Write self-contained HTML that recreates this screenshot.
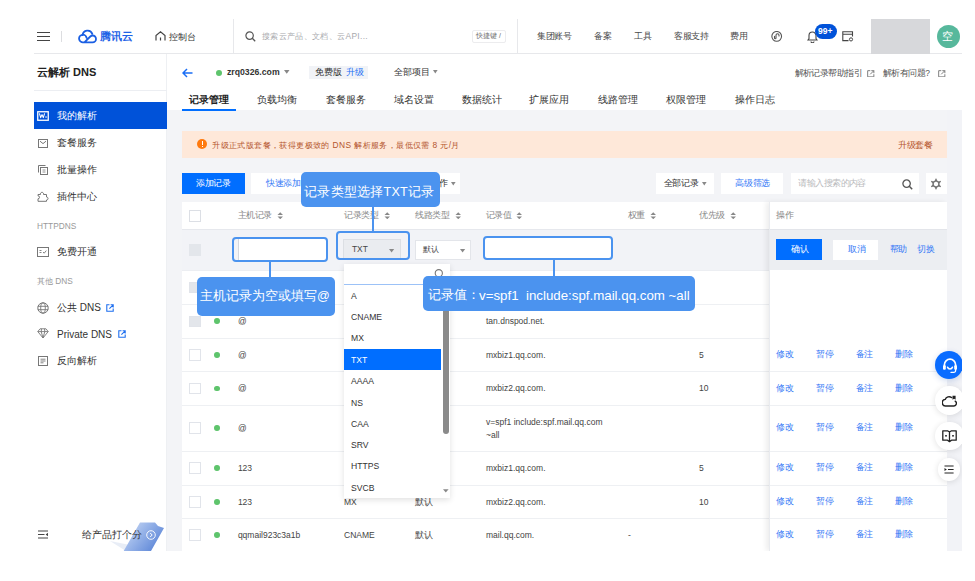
<!DOCTYPE html>
<html><head><meta charset="utf-8">
<style>
*{margin:0;padding:0;box-sizing:border-box}
html,body{width:975px;height:581px;overflow:hidden;background:#fff;font-family:"Liberation Sans",sans-serif;color:#333}
.a{position:absolute}
.t{position:absolute;white-space:nowrap;line-height:1}
#frame{position:absolute;left:34px;top:19px;width:928px;height:532px;overflow:hidden;background:#fff}
</style></head><body>
<div id="frame">
  <!-- top nav (frame coords: subtract 34,19) -->
  <div class="a" style="left:0;top:0;width:928px;height:35px;border-bottom:1px solid #e7e8eb;background:#fff"></div>

  <!-- NAV CONTENT -->
  <div class="a" style="left:3px;top:13px;width:13px;height:1.4px;background:#444"></div>
  <div class="a" style="left:3px;top:17px;width:13px;height:1.4px;background:#444"></div>
  <div class="a" style="left:3px;top:21px;width:13px;height:1.4px;background:#444"></div>
  <div class="a" style="left:27px;top:12px;width:1px;height:11px;background:#dcdde0"></div>
  <svg class="a" style="left:44px;top:10px" width="20" height="16" viewBox="0 0 20 16"><g fill="none" stroke="#1a5fe3" stroke-width="1.8" stroke-linecap="round" stroke-linejoin="round"><path d="M4.6 6.2 A5 5 0 0 1 14.3 4.9"/><path d="M8.6 8.8 A3.8 3.8 0 1 0 5.4 13.3 H14.6 A3.4 3.4 0 0 0 14.6 6.5 C13.6 6.5 13 6.9 12.3 7.5 L6.4 13.3"/></g></svg>
  <div class="t" style="left:66.00px;top:12px;font-size:10.8px;font-weight:bold;color:#1f63e6;width:33.00px;text-align:justify;text-align-last:justify">腾讯云</div>
  <svg class="a" style="left:121px;top:12px" width="11" height="10" viewBox="0 0 11 10"><path d="M1 9.5 V4.5 L5.5 0.8 L10 4.5 V9.5 M5.5 9.5 V6.5" fill="none" stroke="#444" stroke-width="1.2"/></svg>
  <div class="t" style="left:135.00px;top:13.5px;font-size:8.5px;color:#333;width:27.00px;text-align:justify;text-align-last:justify">控制台</div>
  <div class="a" style="left:199.4px;top:0;width:1px;height:35px;background:#e7e8eb"></div>
  <div class="a" style="left:483px;top:0;width:1px;height:35px;background:#e7e8eb"></div>
  <svg class="a" style="left:211px;top:12px" width="11" height="11" viewBox="0 0 11 11"><circle cx="4.6" cy="4.6" r="3.7" fill="none" stroke="#555" stroke-width="1.2"/><path d="M7.3 7.3 L10.2 10.2" stroke="#555" stroke-width="1.3"/></svg>
  <div class="t" style="left:228.00px;top:13px;font-size:8.4px;letter-spacing:0.35px;color:#a8a9ad;width:83.50px;text-align:justify;text-align-last:justify">搜索云产品、文档、云</div>
  <div class="t" style="left:311.48px;top:13px;font-size:8.4px;letter-spacing:0.35px;color:#a8a9ad">API...</div>
  <div class="a" style="left:438px;top:11px;width:34px;height:13px;border:1px solid #ececee;border-radius:2px"></div>
  <div class="t" style="left:442.00px;top:14px;font-size:6.8px;color:#666;width:21.00px;text-align:justify;text-align-last:justify">快捷键</div>
  <div class="t" style="left:464.88px;top:14px;font-size:6.8px;color:#666">/</div>
  <div class="t" style="left:503.00px;top:13px;font-size:8.5px;letter-spacing:-0.3px;color:#4a4a4a;width:34.81px;text-align:justify;text-align-last:justify">集团账号</div>
  <div class="t" style="left:560.00px;top:13px;font-size:8.5px;letter-spacing:-0.3px;color:#4a4a4a;width:17.41px;text-align:justify;text-align-last:justify">备案</div>
  <div class="t" style="left:600.00px;top:13px;font-size:8.5px;letter-spacing:-0.3px;color:#4a4a4a;width:17.41px;text-align:justify;text-align-last:justify">工具</div>
  <div class="t" style="left:640.00px;top:13px;font-size:8.5px;letter-spacing:-0.3px;color:#4a4a4a;width:34.81px;text-align:justify;text-align-last:justify">客服支持</div>
  <div class="t" style="left:696.00px;top:13px;font-size:8.5px;letter-spacing:-0.3px;color:#4a4a4a;width:17.41px;text-align:justify;text-align-last:justify">费用</div>
  <svg class="a" style="left:737px;top:12px" width="12" height="12" viewBox="0 0 12 12"><circle cx="5.7" cy="5.35" r="4.85" fill="none" stroke="#555" stroke-width="1.1"/><path d="M3.5 5.4 V7 A0.75 0.75 0 0 0 5 7 V4.2 A1.5 1.5 0 0 1 8 4.2 V5" fill="none" stroke="#555" stroke-width="1.1" stroke-linecap="round"/></svg>
  <svg class="a" style="left:773px;top:11px" width="11" height="13" viewBox="0 0 11 13"><path d="M1 10 H10 L9 8.6 V5.5 A3.5 3.5 0 0 0 2 5.5 V8.6 Z M4 11.5 A1.5 1.2 0 0 0 7 11.5" fill="none" stroke="#444" stroke-width="1.1"/></svg>
  <div class="a" style="left:781px;top:5px;width:22px;height:14.5px;border-radius:8px;background:#0052d9"></div>
  <div class="t" style="left:784px;top:8px;font-size:8.5px;font-weight:bold;color:#fff">99+</div>
  <svg class="a" style="left:808px;top:12px" width="12" height="11" viewBox="0 0 12 11"><path d="M6.5 9.6 H0.8 V0.8 H10.5 V5.5 M0.8 3.2 H10.5" fill="none" stroke="#444" stroke-width="1.1"/><circle cx="9" cy="8.4" r="1.6" fill="none" stroke="#444" stroke-width="1"/></svg>
  <div class="a" style="left:837px;top:0;width:59px;height:35px;background:#d7d8db"></div>
  <div class="a" style="left:902.5px;top:5.8px;width:23px;height:23px;border-radius:50%;background:#57b89c"></div>
  <div class="t" style="left:908.00px;top:12px;font-size:11px;color:#fff">空</div>
  <!-- sidebar -->
  <div class="a" style="left:0;top:35px;width:133px;height:497px;border-right:1px solid #eef0f3;background:#fff"></div>
  <div class="a" style="left:0;top:71px;width:133px;height:1px;background:#eceef2"></div>
  <div class="a" style="left:0;top:83px;width:133px;height:27px;background:#0052d9"></div>

  <!-- SIDEBAR CONTENT -->
  <div class="t" style="left:3.00px;top:48px;font-size:11px;font-weight:bold;color:#222;width:33.00px;text-align:justify;text-align-last:justify">云解析</div>
  <div class="t" style="left:39.05px;top:48px;font-size:11px;font-weight:bold;color:#222">DNS</div>
  <svg class="a" style="left:3px;top:92px" width="12" height="10" viewBox="0 0 12 10"><rect x="0.75" y="0.75" width="10.5" height="8.5" fill="none" stroke="#fff" stroke-width="1.3"/><path d="M2.4 2.4 L3.7 6.6 L5 3.6 L6.3 6.6 L7.6 2.4" fill="none" stroke="#fff" stroke-width="1.1" stroke-linejoin="round"/><rect x="8.4" y="5.4" width="1.3" height="1.3" fill="#fff"/></svg>
  <div class="t" style="left:23.00px;top:92px;font-size:10px;color:#fff;width:40.00px;text-align:justify;text-align-last:justify">我的解析</div>
  <svg class="a" style="left:4px;top:120px" width="10" height="9" viewBox="0 0 10 9"><rect x="0.5" y="0.5" width="9" height="8" fill="none" stroke="#777" stroke-width="1"/><path d="M2 2.2 L5 4.6 L8 2.2" fill="none" stroke="#777" stroke-width="1"/></svg>
  <div class="t" style="left:23.00px;top:119px;font-size:10px;color:#333;width:40.00px;text-align:justify;text-align-last:justify">套餐服务</div>
  <svg class="a" style="left:4px;top:146px" width="10" height="10" viewBox="0 0 10 10"><path d="M0.5 7.5 V0.5 H7.5" fill="none" stroke="#777" stroke-width="1"/><rect x="2.5" y="2.5" width="7" height="7" fill="none" stroke="#777" stroke-width="1"/><path d="M4.5 5 H7.5 M4.5 7 H7.5" stroke="#777" stroke-width="0.8"/></svg>
  <div class="t" style="left:23.00px;top:146px;font-size:10px;color:#333;width:40.00px;text-align:justify;text-align-last:justify">批量操作</div>
  <svg class="a" style="left:3px;top:172px" width="12" height="11" viewBox="0 0 12 11"><path d="M1 3.5 H3.5 A1.6 1.6 0 1 1 6.5 3.5 H9.5 V6 A1.5 1.5 0 1 1 9.5 9 V10.3 H1 V7.8 A1.5 1.5 0 1 0 1 4.8 Z" fill="none" stroke="#777" stroke-width="1"/></svg>
  <div class="t" style="left:23.00px;top:173px;font-size:10px;color:#333;width:40.00px;text-align:justify;text-align-last:justify">插件中心</div>
  <div class="t" style="left:3px;top:202.8px;font-size:8.3px;color:#999">HTTPDNS</div>
  <svg class="a" style="left:3px;top:228px" width="12" height="10" viewBox="0 0 12 10"><rect x="0.5" y="0.5" width="11" height="9" fill="none" stroke="#777" stroke-width="1"/><path d="M2.5 3.5 H4.5 M2.5 5.5 H4.5 M6 5 L7.2 6.2 L9.3 3.6" fill="none" stroke="#777" stroke-width="0.9"/></svg>
  <div class="t" style="left:23.00px;top:228px;font-size:10px;color:#333;width:40.00px;text-align:justify;text-align-last:justify">免费开通</div>
  <div class="t" style="left:3.00px;top:257.8px;font-size:8.3px;color:#999;width:16.00px;text-align:justify;text-align-last:justify">其他</div>
  <div class="t" style="left:21.30px;top:257.8px;font-size:8.3px;color:#999">DNS</div>
  <svg class="a" style="left:3px;top:283px" width="12" height="12" viewBox="0 0 12 12"><circle cx="6" cy="6" r="5.2" fill="none" stroke="#777" stroke-width="1"/><ellipse cx="6" cy="6" rx="2.3" ry="5.2" fill="none" stroke="#777" stroke-width="0.9"/><path d="M0.8 4.3 H11.2 M0.8 7.7 H11.2" stroke="#777" stroke-width="0.9"/></svg>
  <div class="t" style="left:23.00px;top:284px;font-size:10px;color:#333;width:20.00px;text-align:justify;text-align-last:justify">公共</div>
  <div class="t" style="left:45.77px;top:284px;font-size:10px;color:#333">DNS</div>
  <svg class="a" style="left:72px;top:285px" width="8" height="8" viewBox="0 0 8 8"><path d="M3.5 0.8 H0.8 V7.2 H7.2 V4.5 M4.6 0.8 H7.2 V3.4 M7.2 0.8 L3.4 4.6" fill="none" stroke="#1e6ff0" stroke-width="1.1"/></svg>
  <svg class="a" style="left:3px;top:309px" width="12" height="11" viewBox="0 0 12 11"><path d="M3 0.8 H9 L11.2 3.6 L6 10 L0.8 3.6 Z M0.8 3.6 H11.2 M4.2 3.6 L6 10 L7.8 3.6 M4.5 0.8 L4.2 3.6 M7.5 0.8 L7.8 3.6" fill="none" stroke="#777" stroke-width="0.9"/></svg>
  <div class="t" style="left:23px;top:310.5px;font-size:10px;color:#333">Private DNS</div>
  <svg class="a" style="left:84px;top:311px" width="8" height="8" viewBox="0 0 8 8"><path d="M3.5 0.8 H0.8 V7.2 H7.2 V4.5 M4.6 0.8 H7.2 V3.4 M7.2 0.8 L3.4 4.6" fill="none" stroke="#1e6ff0" stroke-width="1.1"/></svg>
  <svg class="a" style="left:4px;top:337px" width="10" height="10" viewBox="0 0 10 10"><rect x="0.5" y="0.5" width="9" height="9" fill="none" stroke="#777" stroke-width="1"/><path d="M2.5 3.2 H7.5 M2.5 5 H7.5 M2.5 6.8 H5.5" stroke="#777" stroke-width="0.9"/></svg>
  <div class="t" style="left:23.00px;top:337px;font-size:10px;color:#333;width:40.00px;text-align:justify;text-align-last:justify">反向解析</div>
  <!-- bottom feedback -->
  <svg class="a" style="left:76px;top:500px" width="56" height="32" viewBox="0 0 56 32"><defs><linearGradient id="fb" x1="0" y1="0" x2="1" y2="0.6"><stop offset="0" stop-color="#d5e0f5"/><stop offset="0.45" stop-color="#9db8ea"/><stop offset="1" stop-color="#5f88d8"/></linearGradient></defs><path d="M0 22 L20 26 L16 32 Z" fill="#e6ebf5" opacity="0.9"/><path d="M13.7 32 L30 3.5 H45 L48 7 L54 9 L41 32 Z" fill="url(#fb)"/></svg>
  <svg class="a" style="left:4px;top:511px" width="10" height="9" viewBox="0 0 10 9"><path d="M0 1 H10 M0 4.5 H6.5 M0 8 H10" stroke="#444" stroke-width="1.2"/><path d="M10 2.8 L7.6 4.5 L10 6.2 Z" fill="#444"/></svg>
  <div class="t" style="left:48.00px;top:511px;font-size:10px;color:#333;width:60.00px;text-align:justify;text-align-last:justify">给产品打个分</div>
  <svg class="a" style="left:112px;top:511px" width="10" height="10" viewBox="0 0 10 10"><circle cx="5" cy="5" r="4.3" fill="none" stroke="#fff" stroke-width="1" opacity="0.9"/><path d="M4.2 3 L6.2 5 L4.2 7" fill="none" stroke="#fff" stroke-width="1"/></svg>
  <!-- main header -->
  <div class="a" style="left:133px;top:35px;width:795px;height:56px;background:#fff"></div>
  <div class="a" style="left:133px;top:91px;width:795px;height:441px;background:#f3f4f7"></div>
  <div class="a" style="left:148px;top:90px;width:54px;height:2px;background:#006eff"></div>

  <!-- HEADER CONTENT -->
  <svg class="a" style="left:147.5px;top:48.5px" width="11" height="10" viewBox="0 0 11 10"><path d="M10.5 5 H1.2 M5 1 L1 5 L5 9" fill="none" stroke="#1a6ef5" stroke-width="1.5"/></svg>
  <div class="a" style="left:181.8px;top:50.8px;width:6px;height:6px;border-radius:50%;background:#5ec46c"></div>
  <div class="t" style="left:193px;top:49px;font-size:8.7px;font-weight:bold;color:#333">zrq0326.com</div>
  <svg class="a" style="left:249.5px;top:51px" width="6" height="4" viewBox="0 0 6 4"><path d="M0 0 H5.5 L2.75 3.8 Z" fill="#888"/></svg>
  <div class="a" style="left:274.5px;top:46.5px;width:59px;height:13.5px;background:#f1f3f7"></div>
  <div class="t" style="left:280.50px;top:48.5px;font-size:8.5px;color:#333;width:27.00px;text-align:justify;text-align-last:justify">免费版</div>
  <div class="t" style="left:311.50px;top:48.5px;font-size:8.5px;color:#1a6ef5;width:18.00px;text-align:justify;text-align-last:justify">升级</div>
  <div class="t" style="left:359.50px;top:48.5px;font-size:8.5px;color:#333;width:36.00px;text-align:justify;text-align-last:justify">全部项目</div>
  <svg class="a" style="left:398.5px;top:51px" width="5" height="4" viewBox="0 0 5 4"><path d="M0 0 H4.6 L2.3 3.5 Z" fill="#888"/></svg>
  <div class="t" style="left:760.50px;top:49.5px;font-size:8.5px;letter-spacing:-0.55px;color:#555;width:67.61px;text-align:justify;text-align-last:justify">解析记录帮助指引</div>
  <svg class="a" style="left:833px;top:50.5px" width="7.5" height="7.5" viewBox="0 0 8 8"><path d="M3.5 0.7 H0.7 V7.3 H7.3 V4.5 M4.6 0.7 H7.3 V3.4 M7.3 0.7 L3.4 4.6" fill="none" stroke="#777" stroke-width="1"/></svg>
  <div class="t" style="left:849.00px;top:49.5px;font-size:8.5px;letter-spacing:-0.55px;color:#555;width:42.27px;text-align:justify;text-align-last:justify">解析有问题</div>
  <div class="t" style="left:891.25px;top:49.5px;font-size:8.5px;letter-spacing:-0.55px;color:#555">?</div>
  <svg class="a" style="left:904px;top:50.5px" width="7.5" height="7.5" viewBox="0 0 8 8"><path d="M3.5 0.7 H0.7 V7.3 H7.3 V4.5 M4.6 0.7 H7.3 V3.4 M7.3 0.7 L3.4 4.6" fill="none" stroke="#777" stroke-width="1"/></svg>
  <div class="t" style="left:155.00px;top:75.5px;font-size:10px;font-weight:bold;color:#222;width:40.00px;text-align:justify;text-align-last:justify">记录管理</div>
  <div class="t" style="left:223.00px;top:75.5px;font-size:10px;color:#333;width:40.00px;text-align:justify;text-align-last:justify">负载均衡</div>
  <div class="t" style="left:291.80px;top:75.5px;font-size:10px;color:#333;width:40.00px;text-align:justify;text-align-last:justify">套餐服务</div>
  <div class="t" style="left:359.50px;top:75.5px;font-size:10px;color:#333;width:40.00px;text-align:justify;text-align-last:justify">域名设置</div>
  <div class="t" style="left:428.20px;top:75.5px;font-size:10px;color:#333;width:40.00px;text-align:justify;text-align-last:justify">数据统计</div>
  <div class="t" style="left:495.20px;top:75.5px;font-size:10px;color:#333;width:40.00px;text-align:justify;text-align-last:justify">扩展应用</div>
  <div class="t" style="left:563.80px;top:75.5px;font-size:10px;color:#333;width:40.00px;text-align:justify;text-align-last:justify">线路管理</div>
  <div class="t" style="left:632.30px;top:75.5px;font-size:10px;color:#333;width:40.00px;text-align:justify;text-align-last:justify">权限管理</div>
  <div class="t" style="left:700.80px;top:75.5px;font-size:10px;color:#333;width:40.00px;text-align:justify;text-align-last:justify">操作日志</div>
  <!-- banner -->
  <div class="a" style="left:148px;top:112px;width:765px;height:27px;background:#fee8d9"></div>
  <div class="a" style="left:163.2px;top:120px;width:10px;height:10px;border-radius:50%;background:#ff7a0f"></div>
  <div class="a" style="left:167.6px;top:122px;width:1.3px;height:3.8px;background:#fff"></div>
  <div class="a" style="left:167.6px;top:126.6px;width:1.3px;height:1.3px;background:#fff"></div>
  <div class="t" style="left:178.30px;top:121.5px;font-size:8.4px;letter-spacing:0.4px;color:#b4552d;width:117.61px;text-align:justify;text-align-last:justify">升级正式版套餐，获得更极致的</div>
  <div class="t" style="left:298.61px;top:121.5px;font-size:8.4px;letter-spacing:0.4px;color:#b4552d">DNS</div>
  <div class="t" style="left:320.22px;top:121.5px;font-size:8.4px;letter-spacing:0.4px;color:#b4552d;width:75.62px;text-align:justify;text-align-last:justify">解析服务，最低仅需</div>
  <div class="t" style="left:398.55px;top:121.5px;font-size:8.4px;letter-spacing:0.4px;color:#b4552d">8</div>
  <div class="t" style="left:406.35px;top:121.5px;font-size:8.4px;letter-spacing:0.4px;color:#b4552d">元</div>
  <div class="t" style="left:414.74px;top:121.5px;font-size:8.4px;letter-spacing:0.4px;color:#b4552d">/</div>
  <div class="t" style="left:417.47px;top:121.5px;font-size:8.4px;letter-spacing:0.4px;color:#b4552d">月</div>
  <div class="t" style="left:864.00px;top:121.5px;font-size:8.5px;letter-spacing:-0.3px;color:#b4552d;width:34.81px;text-align:justify;text-align-last:justify">升级套餐</div>
  <!-- toolbar -->
  <div class="a" style="left:148px;top:154px;width:62.5px;height:21.3px;background:#006eff"></div>
  <div class="t" style="left:162.00px;top:160px;font-size:8.5px;letter-spacing:-0.33px;color:#fff;width:34.69px;text-align:justify;text-align-last:justify">添加记录</div>
  <div class="a" style="left:217.3px;top:154px;width:208.5px;height:21.3px;background:#fff"></div>
  <div class="t" style="left:232.00px;top:160px;font-size:8.5px;letter-spacing:-0.33px;color:#3478f6;width:34.69px;text-align:justify;text-align-last:justify">快速添加</div>
  <div class="t" style="left:396.00px;top:160px;font-size:8.5px;letter-spacing:-0.33px;color:#333;width:17.34px;text-align:justify;text-align-last:justify">操作</div>
  <svg class="a" style="left:416.8px;top:162.5px" width="5" height="4" viewBox="0 0 5 4"><path d="M0 0 H4.6 L2.3 3.5 Z" fill="#888"/></svg>
  <div class="a" style="left:622px;top:154px;width:57.5px;height:21.3px;background:#fff"></div>
  <div class="t" style="left:629.80px;top:160px;font-size:8.5px;letter-spacing:-0.33px;color:#333;width:34.69px;text-align:justify;text-align-last:justify">全部记录</div>
  <svg class="a" style="left:668.3px;top:162.5px" width="5" height="4" viewBox="0 0 5 4"><path d="M0 0 H4.6 L2.3 3.5 Z" fill="#888"/></svg>
  <div class="a" style="left:687.4px;top:154px;width:61.8px;height:21.3px;background:#fff"></div>
  <div class="t" style="left:701.20px;top:160px;font-size:8.5px;letter-spacing:-0.33px;color:#3478f6;width:34.69px;text-align:justify;text-align-last:justify">高级筛选</div>
  <div class="a" style="left:756.6px;top:154px;width:128px;height:21.3px;background:#fff"></div>
  <div class="t" style="left:764.30px;top:160px;font-size:8.5px;letter-spacing:-0.55px;color:#b9babd;width:67.61px;text-align:justify;text-align-last:justify">请输入搜索的内容</div>
  <svg class="a" style="left:867.5px;top:159.5px" width="11" height="11" viewBox="0 0 11 11"><circle cx="4.6" cy="4.6" r="3.7" fill="none" stroke="#555" stroke-width="1.3"/><path d="M7.3 7.3 L10.2 10.2" stroke="#555" stroke-width="1.5"/></svg>
  <div class="a" style="left:892px;top:154px;width:21px;height:21.3px;background:#fff"></div>
  <svg class="a" style="left:896.3px;top:158.8px" width="12" height="12" viewBox="0 0 12 12"><path d="M6 2.7 L8.86 4.35 L8.86 7.65 L6 9.3 L3.14 7.65 L3.14 4.35 Z" fill="none" stroke="#727272" stroke-width="1.5"/><path d="M6 2.7 V1.2 M8.86 4.35 L10.2 3.6 M8.86 7.65 L10.2 8.4 M6 9.3 V10.8 M3.14 7.65 L1.8 8.4 M3.14 4.35 L1.8 3.6" stroke="#727272" stroke-width="1.5" stroke-linecap="round"/></svg>
  <!-- table -->
  <div class="a" style="left:148px;top:183px;width:765px;height:349px;background:#fff"></div>
  <div class="a" style="left:148px;top:210.3px;width:765px;height:41.2px;background:#f2f3f7;border-top:1px solid #e6e8ed"></div>
  <div class="a" style="left:148px;top:284.9px;width:765px;height:1px;background:#eef0f3"></div>
  <div class="a" style="left:148px;top:318.7px;width:765px;height:1px;background:#eef0f3"></div>
  <div class="a" style="left:148px;top:352.0px;width:765px;height:1px;background:#eef0f3"></div>
  <div class="a" style="left:148px;top:385.9px;width:765px;height:1px;background:#eef0f3"></div>
  <div class="a" style="left:148px;top:431.5px;width:765px;height:1px;background:#eef0f3"></div>
  <div class="a" style="left:148px;top:465.8px;width:765px;height:1px;background:#eef0f3"></div>
  <div class="a" style="left:148px;top:499.2px;width:765px;height:1px;background:#eef0f3"></div>
  <div class="a" style="left:148px;top:251px;width:765px;height:1px;background:#eceef2"></div>
  <div class="a" style="left:155.3px;top:191px;width:11.5px;height:11.5px;border:1px solid #dcdfe5;background:#fff"></div>
  <div class="t" style="left:203.50px;top:192.35px;font-size:8.5px;letter-spacing:-0.4px;color:#888;;width:34.41px;text-align:justify;text-align-last:justify">主机记录</div>
  <svg class="a" style="left:243px;top:192.5px" width="6.5" height="7.5" viewBox="0 0 6.5 7.5"><path d="M3.25 0.3 L6 3.1 H0.5 Z M3.25 7.2 L6 4.4 H0.5 Z" fill="#888"/></svg>
  <div class="t" style="left:310.00px;top:192.35px;font-size:8.5px;letter-spacing:-0.4px;color:#888;;width:34.41px;text-align:justify;text-align-last:justify">记录类型</div>
  <svg class="a" style="left:349.5px;top:192.5px" width="6.5" height="7.5" viewBox="0 0 6.5 7.5"><path d="M3.25 0.3 L6 3.1 H0.5 Z M3.25 7.2 L6 4.4 H0.5 Z" fill="#888"/></svg>
  <div class="t" style="left:381.00px;top:192.35px;font-size:8.5px;letter-spacing:-0.4px;color:#888;;width:34.41px;text-align:justify;text-align-last:justify">线路类型</div>
  <svg class="a" style="left:420.5px;top:192.5px" width="6.5" height="7.5" viewBox="0 0 6.5 7.5"><path d="M3.25 0.3 L6 3.1 H0.5 Z M3.25 7.2 L6 4.4 H0.5 Z" fill="#888"/></svg>
  <div class="t" style="left:451.60px;top:192.35px;font-size:8.5px;letter-spacing:-0.4px;color:#888;;width:25.81px;text-align:justify;text-align-last:justify">记录值</div>
  <svg class="a" style="left:482px;top:192.5px" width="6.5" height="7.5" viewBox="0 0 6.5 7.5"><path d="M3.25 0.3 L6 3.1 H0.5 Z M3.25 7.2 L6 4.4 H0.5 Z" fill="#888"/></svg>
  <div class="t" style="left:593.70px;top:192.35px;font-size:8.5px;letter-spacing:-0.4px;color:#888;;width:17.20px;text-align:justify;text-align-last:justify">权重</div>
  <svg class="a" style="left:616.3px;top:192.5px" width="6.5" height="7.5" viewBox="0 0 6.5 7.5"><path d="M3.25 0.3 L6 3.1 H0.5 Z M3.25 7.2 L6 4.4 H0.5 Z" fill="#888"/></svg>
  <div class="t" style="left:665.00px;top:192.35px;font-size:8.5px;letter-spacing:-0.4px;color:#888;;width:25.81px;text-align:justify;text-align-last:justify">优先级</div>
  <svg class="a" style="left:695.5px;top:192.5px" width="6.5" height="7.5" viewBox="0 0 6.5 7.5"><path d="M3.25 0.3 L6 3.1 H0.5 Z M3.25 7.2 L6 4.4 H0.5 Z" fill="#888"/></svg>
  <div class="a" style="left:155.3px;top:224.8px;width:11.7px;height:12px;background:#e3e6eb"></div>
  <div class="a" style="left:155.3px;top:262.6px;width:11.5px;height:11.5px;border:1px solid #e1e4ea;background:#e3e6eb"></div>
  <div class="a" style="left:155.3px;top:296.5px;width:11.5px;height:11.5px;border:1px solid #e1e4ea;background:#e3e6eb"></div>
  <div class="a" style="left:179.8px;top:299.4px;width:5.8px;height:5.8px;border-radius:50%;background:#5ec46c"></div>
  <div class="t" style="left:203.9px;top:298.05px;font-size:8.5px;color:#444;">@</div>
  <div class="t" style="left:452px;top:298.05px;font-size:8.5px;color:#444;">tan.dnspod.net.</div>
  <div class="a" style="left:155.3px;top:330.1px;width:11.5px;height:11.5px;border:1px solid #e1e4ea;background:#fff"></div>
  <div class="a" style="left:179.8px;top:333.0px;width:5.8px;height:5.8px;border-radius:50%;background:#5ec46c"></div>
  <div class="t" style="left:203.9px;top:331.65px;font-size:8.5px;color:#444;">@</div>
  <div class="t" style="left:452px;top:331.65px;font-size:8.5px;color:#444;">mxbiz1.qq.com.</div>
  <div class="t" style="left:665px;top:331.65px;font-size:8.5px;color:#444;">5</div>
  <div class="a" style="left:155.3px;top:363.7px;width:11.5px;height:11.5px;border:1px solid #e1e4ea;background:#fff"></div>
  <div class="a" style="left:179.8px;top:366.6px;width:5.8px;height:5.8px;border-radius:50%;background:#5ec46c"></div>
  <div class="t" style="left:203.9px;top:365.25px;font-size:8.5px;color:#444;">@</div>
  <div class="t" style="left:452px;top:365.25px;font-size:8.5px;color:#444;">mxbiz2.qq.com.</div>
  <div class="t" style="left:665px;top:365.25px;font-size:8.5px;color:#444;">10</div>
  <div class="a" style="left:155.3px;top:403.4px;width:11.5px;height:11.5px;border:1px solid #e1e4ea;background:#fff"></div>
  <div class="a" style="left:179.8px;top:406.3px;width:5.8px;height:5.8px;border-radius:50%;background:#5ec46c"></div>
  <div class="t" style="left:203.9px;top:404.95px;font-size:8.5px;color:#444;">@</div>
  <div class="t" style="left:452px;top:399.15px;font-size:8.5px;color:#444;">v=spf1 include:spf.mail.qq.com</div>
  <div class="t" style="left:452px;top:412.25px;font-size:8.5px;color:#444;">~all</div>
  <div class="a" style="left:155.3px;top:443.4px;width:11.5px;height:11.5px;border:1px solid #e1e4ea;background:#fff"></div>
  <div class="a" style="left:179.8px;top:446.3px;width:5.8px;height:5.8px;border-radius:50%;background:#5ec46c"></div>
  <div class="t" style="left:203.9px;top:444.95px;font-size:8.5px;color:#444;">123</div>
  <div class="t" style="left:452px;top:444.95px;font-size:8.5px;color:#444;">mxbiz1.qq.com.</div>
  <div class="t" style="left:665px;top:444.95px;font-size:8.5px;color:#444;">5</div>
  <div class="a" style="left:155.3px;top:477.2px;width:11.5px;height:11.5px;border:1px solid #e1e4ea;background:#fff"></div>
  <div class="a" style="left:179.8px;top:480.1px;width:5.8px;height:5.8px;border-radius:50%;background:#5ec46c"></div>
  <div class="t" style="left:203.9px;top:478.75px;font-size:8.5px;color:#444;">123</div>
  <div class="t" style="left:310px;top:478.75px;font-size:8.5px;color:#444;">MX</div>
  <div class="t" style="left:381.00px;top:478.75px;font-size:8.5px;color:#444;;width:18.00px;text-align:justify;text-align-last:justify">默认</div>
  <div class="t" style="left:452px;top:478.75px;font-size:8.5px;color:#444;">mxbiz2.qq.com.</div>
  <div class="t" style="left:665px;top:478.75px;font-size:8.5px;color:#444;">10</div>
  <div class="a" style="left:155.3px;top:510.2px;width:11.5px;height:11.5px;border:1px solid #e1e4ea;background:#fff"></div>
  <div class="a" style="left:179.8px;top:513.1px;width:5.8px;height:5.8px;border-radius:50%;background:#5ec46c"></div>
  <div class="t" style="left:203.9px;top:511.75px;font-size:8.5px;color:#444;">qqmail923c3a1b</div>
  <div class="t" style="left:310px;top:511.75px;font-size:8.5px;color:#444;">CNAME</div>
  <div class="t" style="left:381.00px;top:511.75px;font-size:8.5px;color:#444;;width:18.00px;text-align:justify;text-align-last:justify">默认</div>
  <div class="t" style="left:452px;top:511.75px;font-size:8.5px;color:#444;">mail.qq.com.</div>
  <div class="t" style="left:594px;top:511.75px;font-size:8.5px;color:#444;">-</div>
  <!-- ACTION COLUMN -->
  <div class="a" style="left:734.8px;top:183px;width:178px;height:349px;background:#fff;box-shadow:-3px 0 5px rgba(0,0,0,0.07);border-left:1px solid #e9ebef"></div>
  <div class="a" style="left:735.8px;top:210.3px;width:177px;height:41.2px;background:#eceef2;border-top:1px solid #e3e5ea"></div>
  <div class="a" style="left:735.8px;top:352.0px;width:177px;height:1px;background:#eef0f3"></div>
  <div class="a" style="left:735.8px;top:385.9px;width:177px;height:1px;background:#eef0f3"></div>
  <div class="a" style="left:735.8px;top:431.5px;width:177px;height:1px;background:#eef0f3"></div>
  <div class="a" style="left:735.8px;top:465.8px;width:177px;height:1px;background:#eef0f3"></div>
  <div class="a" style="left:735.8px;top:499.2px;width:177px;height:1px;background:#eef0f3"></div>
  <div class="t" style="left:742.40px;top:192.4px;font-size:8.5px;letter-spacing:-0.33px;color:#888;width:17.34px;text-align:justify;text-align-last:justify">操作</div>
  <div class="a" style="left:742px;top:220.1px;width:46px;height:20.9px;background:#006eff"></div>
  <div class="t" style="left:757.00px;top:226.4px;font-size:8.5px;letter-spacing:-0.5px;color:#fff;width:17.00px;text-align:justify;text-align-last:justify">确认</div>
  <div class="a" style="left:799.4px;top:220.6px;width:45px;height:20.4px;background:#fff"></div>
  <div class="t" style="left:814.00px;top:225.8px;font-size:8.5px;letter-spacing:-0.5px;color:#3478f6;width:17.00px;text-align:justify;text-align-last:justify">取消</div>
  <div class="t" style="left:855.60px;top:225.8px;font-size:8.5px;letter-spacing:-0.5px;color:#3478f6;width:17.00px;text-align:justify;text-align-last:justify">帮助</div>
  <div class="t" style="left:883.30px;top:225.8px;font-size:8.5px;letter-spacing:-0.5px;color:#3478f6;width:17.00px;text-align:justify;text-align-last:justify">切换</div>
  <div class="t" style="left:742.40px;top:331.1px;font-size:8.5px;letter-spacing:-0.5px;color:#3478f6;width:17.00px;text-align:justify;text-align-last:justify">修改</div>
  <div class="t" style="left:782.00px;top:331.1px;font-size:8.5px;letter-spacing:-0.5px;color:#3478f6;width:17.00px;text-align:justify;text-align-last:justify">暂停</div>
  <div class="t" style="left:821.80px;top:331.1px;font-size:8.5px;letter-spacing:-0.5px;color:#3478f6;width:17.00px;text-align:justify;text-align-last:justify">备注</div>
  <div class="t" style="left:861.40px;top:331.1px;font-size:8.5px;letter-spacing:-0.5px;color:#3478f6;width:17.00px;text-align:justify;text-align-last:justify">删除</div>
  <div class="t" style="left:742.40px;top:364.7px;font-size:8.5px;letter-spacing:-0.5px;color:#3478f6;width:17.00px;text-align:justify;text-align-last:justify">修改</div>
  <div class="t" style="left:782.00px;top:364.7px;font-size:8.5px;letter-spacing:-0.5px;color:#3478f6;width:17.00px;text-align:justify;text-align-last:justify">暂停</div>
  <div class="t" style="left:821.80px;top:364.7px;font-size:8.5px;letter-spacing:-0.5px;color:#3478f6;width:17.00px;text-align:justify;text-align-last:justify">备注</div>
  <div class="t" style="left:861.40px;top:364.7px;font-size:8.5px;letter-spacing:-0.5px;color:#3478f6;width:17.00px;text-align:justify;text-align-last:justify">删除</div>
  <div class="t" style="left:742.40px;top:404.4px;font-size:8.5px;letter-spacing:-0.5px;color:#3478f6;width:17.00px;text-align:justify;text-align-last:justify">修改</div>
  <div class="t" style="left:782.00px;top:404.4px;font-size:8.5px;letter-spacing:-0.5px;color:#3478f6;width:17.00px;text-align:justify;text-align-last:justify">暂停</div>
  <div class="t" style="left:821.80px;top:404.4px;font-size:8.5px;letter-spacing:-0.5px;color:#3478f6;width:17.00px;text-align:justify;text-align-last:justify">备注</div>
  <div class="t" style="left:861.40px;top:404.4px;font-size:8.5px;letter-spacing:-0.5px;color:#3478f6;width:17.00px;text-align:justify;text-align-last:justify">删除</div>
  <div class="t" style="left:742.40px;top:444.4px;font-size:8.5px;letter-spacing:-0.5px;color:#3478f6;width:17.00px;text-align:justify;text-align-last:justify">修改</div>
  <div class="t" style="left:782.00px;top:444.4px;font-size:8.5px;letter-spacing:-0.5px;color:#3478f6;width:17.00px;text-align:justify;text-align-last:justify">暂停</div>
  <div class="t" style="left:821.80px;top:444.4px;font-size:8.5px;letter-spacing:-0.5px;color:#3478f6;width:17.00px;text-align:justify;text-align-last:justify">备注</div>
  <div class="t" style="left:861.40px;top:444.4px;font-size:8.5px;letter-spacing:-0.5px;color:#3478f6;width:17.00px;text-align:justify;text-align-last:justify">删除</div>
  <div class="t" style="left:742.40px;top:478.2px;font-size:8.5px;letter-spacing:-0.5px;color:#3478f6;width:17.00px;text-align:justify;text-align-last:justify">修改</div>
  <div class="t" style="left:782.00px;top:478.2px;font-size:8.5px;letter-spacing:-0.5px;color:#3478f6;width:17.00px;text-align:justify;text-align-last:justify">暂停</div>
  <div class="t" style="left:821.80px;top:478.2px;font-size:8.5px;letter-spacing:-0.5px;color:#3478f6;width:17.00px;text-align:justify;text-align-last:justify">备注</div>
  <div class="t" style="left:861.40px;top:478.2px;font-size:8.5px;letter-spacing:-0.5px;color:#3478f6;width:17.00px;text-align:justify;text-align-last:justify">删除</div>
  <div class="t" style="left:742.40px;top:511.2px;font-size:8.5px;letter-spacing:-0.5px;color:#3478f6;width:17.00px;text-align:justify;text-align-last:justify">修改</div>
  <div class="t" style="left:782.00px;top:511.2px;font-size:8.5px;letter-spacing:-0.5px;color:#3478f6;width:17.00px;text-align:justify;text-align-last:justify">暂停</div>
  <div class="t" style="left:821.80px;top:511.2px;font-size:8.5px;letter-spacing:-0.5px;color:#3478f6;width:17.00px;text-align:justify;text-align-last:justify">备注</div>
  <div class="t" style="left:861.40px;top:511.2px;font-size:8.5px;letter-spacing:-0.5px;color:#3478f6;width:17.00px;text-align:justify;text-align-last:justify">删除</div>
  <!-- EDIT ROW CONTROLS -->
  <div class="a" style="left:203.5px;top:219.5px;width:89px;height:22px;background:#fff;border-left:1px solid #d5d8de"></div>
  <div class="a" style="left:197.8px;top:217.5px;width:96px;height:25px;border:2px solid #4b93ef;border-radius:4px"></div>
  <div class="a" style="left:309.2px;top:220.2px;width:57.5px;height:21px;background:#eaecf0;border:1px solid #dcdfe4"></div>
  <div class="t" style="left:318px;top:225.8px;font-size:8.4px;color:#444">TXT</div>
  <svg class="a" style="left:355.3px;top:229.5px" width="5.5" height="4" viewBox="0 0 5.5 4"><path d="M0 0 H5.2 L2.6 3.5 Z" fill="#888"/></svg>
  <div class="a" style="left:302.2px;top:212.3px;width:74px;height:29.2px;border:2px solid #4b93ef;border-radius:4px"></div>
  <div class="a" style="left:381.3px;top:220.6px;width:56px;height:20.4px;background:#fff;border:1px solid #e3e5ea"></div>
  <div class="t" style="left:388.80px;top:226.4px;font-size:8.4px;color:#444;width:16.00px;text-align:justify;text-align-last:justify">默认</div>
  <svg class="a" style="left:426.3px;top:229.5px" width="5.5" height="4" viewBox="0 0 5.5 4"><path d="M0 0 H5.2 L2.6 3.5 Z" fill="#888"/></svg>
  <div class="a" style="left:449.3px;top:217.4px;width:130.2px;height:24px;background:#fff;border:2px solid #4b93ef;border-radius:4px"></div>
  <!-- DROPDOWN -->
  <div class="a" style="left:309.6px;top:244.5px;width:106.6px;height:234.5px;background:#fff;box-shadow:0 2px 6px rgba(0,0,0,0.12)"></div>
  <div class="a" style="left:309.6px;top:265px;width:97px;height:1px;background:#9cc2f7"></div>
  <svg class="a" style="left:398.5px;top:248.5px" width="12" height="16" viewBox="0 0 12 16"><circle cx="5.8" cy="5.2" r="3.6" fill="none" stroke="#777" stroke-width="1.1"/><path d="M8.3 7.8 L11 10.6" stroke="#777" stroke-width="1.1"/></svg>
  <div class="a" style="left:309.6px;top:330px;width:97.2px;height:21.2px;background:#006eff"></div>
  <div class="t" style="left:317px;top:273.4px;font-size:8.6px;color:#333">A</div>
  <div class="t" style="left:317px;top:294.1px;font-size:8.6px;color:#333">CNAME</div>
  <div class="t" style="left:317px;top:315.4px;font-size:8.6px;color:#333">MX</div>
  <div class="t" style="left:317px;top:337.0px;font-size:8.6px;color:#fff">TXT</div>
  <div class="t" style="left:317px;top:358.2px;font-size:8.6px;color:#333">AAAA</div>
  <div class="t" style="left:317px;top:379.6px;font-size:8.6px;color:#333">NS</div>
  <div class="t" style="left:317px;top:400.8px;font-size:8.6px;color:#333">CAA</div>
  <div class="t" style="left:317px;top:422.0px;font-size:8.6px;color:#333">SRV</div>
  <div class="t" style="left:317px;top:443.4px;font-size:8.6px;color:#333">HTTPS</div>
  <div class="t" style="left:317px;top:464.6px;font-size:8.6px;color:#333">SVCB</div>
  <div class="a" style="left:409px;top:266px;width:6px;height:148.5px;border-radius:3px;background:#8a8a8a"></div>
  <svg class="a" style="left:409px;top:470px" width="6" height="4" viewBox="0 0 6 4"><path d="M0 0.3 H5.6 L2.8 3.5 Z" fill="#888"/></svg>
  <!-- TOOLTIPS -->
  <div class="a" style="left:337.8px;top:187px;width:2px;height:26px;background:#4b93ef"></div>
  <div class="a" style="left:234.8px;top:241.5px;width:2px;height:17px;background:#4b93ef"></div>
  <div class="a" style="left:518.5px;top:240.5px;width:2px;height:17px;background:#4b93ef"></div>
  <div class="a" style="left:266.7px;top:153.2px;width:139.5px;height:35px;background:#4b93ef;border-radius:5px"></div>
  <div class="t" style="left:270.00px;top:166.5px;font-size:12.6px;letter-spacing:0.25px;color:#fff;width:79.50px;text-align:justify;text-align-last:justify">记录类型选择</div>
  <div class="t" style="left:349.50px;top:166.5px;font-size:12.6px;letter-spacing:0.25px;color:#fff">TXT</div>
  <div class="t" style="left:374.03px;top:166.5px;font-size:12.6px;letter-spacing:0.25px;color:#fff;width:26.52px;text-align:justify;text-align-last:justify">记录</div>
  <div class="a" style="left:162.7px;top:258px;width:138.8px;height:38.7px;background:#4b93ef;border-radius:5px"></div>
  <div class="t" style="left:166.00px;top:271px;font-size:12.6px;color:#fff;width:117.00px;text-align:justify;text-align-last:justify">主机记录为空或填写</div>
  <div class="t" style="left:283.00px;top:271px;font-size:12.6px;color:#fff">@</div>
  <div class="a" style="left:389.4px;top:257.3px;width:271.4px;height:35px;background:#4b93ef;border-radius:5px"></div>
  <div class="t" style="left:394.00px;top:269px;font-size:13.4px;color:#fff;width:52.00px;text-align:justify;text-align-last:justify">记录值：</div>
  <div class="t" style="left:445px;top:269.6px;font-size:13.3px;color:#fff">v=spf1&nbsp; include:spf.mail.qq.com ~all</div>
  <!-- FLOAT -->
  <div class="a" style="left:912.7px;top:91px;width:15.3px;height:441px;background:#f2f3f7"></div>
  <div class="a" style="left:901px;top:331.8px;width:28px;height:28px;border-radius:50%;background:#0a6cff;box-shadow:0 2px 6px rgba(0,60,160,0.2)"></div>
  <svg class="a" style="left:907.5px;top:338.5px" width="16" height="16" viewBox="0 0 16 16"><path d="M2.4 8.5 V6.8 A5.6 5.6 0 0 1 13.6 6.8 V8.5" fill="none" stroke="#fff" stroke-width="1.7"/><rect x="1" y="7.2" width="2.8" height="4.6" rx="1" fill="#fff"/><rect x="12.2" y="7.2" width="2.8" height="4.6" rx="1" fill="#fff"/><path d="M5.6 9.3 A2.5 2.3 0 0 0 10.4 9.3" fill="none" stroke="#fff" stroke-width="1.6" stroke-linecap="round"/><path d="M13.6 11.5 V12.6 A1.8 1.8 0 0 1 11.8 14.4 H9" fill="none" stroke="#fff" stroke-width="1.3" stroke-linecap="round"/></svg>
  <div class="a" style="left:901.2px;top:367.3px;width:28.4px;height:28.4px;border-radius:50%;background:#fff;box-shadow:0 1px 6px rgba(0,0,0,0.12)"></div>
  <svg class="a" style="left:908px;top:375.5px" width="15" height="12" viewBox="0 0 15 12"><path d="M4 11 H12 A2.6 2.6 0 0 0 13.2 6.2 M9.6 2.5 A4.2 4.2 0 0 0 3.2 4.4 A3.3 3.3 0 0 0 4 11" fill="none" stroke="#222" stroke-width="1.4" stroke-linecap="round"/><path d="M10.5 0.8 H13.6 V4.8 L12.05 3.8 L10.5 4.8 Z" fill="#222"/></svg>
  <div class="a" style="left:901.2px;top:403.1px;width:28.4px;height:28.4px;border-radius:50%;background:#fff;box-shadow:0 1px 6px rgba(0,0,0,0.12)"></div>
  <svg class="a" style="left:908px;top:411px" width="15" height="12.5" viewBox="0 0 15 12.5"><path d="M7.5 2 L5.5 0.8 H0.8 V10.2 H5.5 L7.5 11.6 L9.5 10.2 H14.2 V0.8 H9.5 Z M7.5 2 V11.4" fill="none" stroke="#222" stroke-width="1.3" stroke-linejoin="round"/><rect x="3.2" y="5" width="1.6" height="1.6" fill="#222"/><rect x="10.2" y="5" width="1.6" height="1.6" fill="#222"/></svg>
  <div class="a" style="left:903.8px;top:439.2px;width:22.6px;height:22.6px;border-radius:50%;background:#fff;box-shadow:0 1px 6px rgba(0,0,0,0.12)"></div>
  <svg class="a" style="left:910px;top:445.5px" width="10" height="9" viewBox="0 0 10 9"><path d="M0.5 1 H9.6 M4 4.5 H9.6 M0.5 8 H9.6" stroke="#222" stroke-width="1.2"/><path d="M0.5 2.9 L2.8 4.5 L0.5 6.1 Z" fill="#222"/></svg>
</div>
</body></html>
